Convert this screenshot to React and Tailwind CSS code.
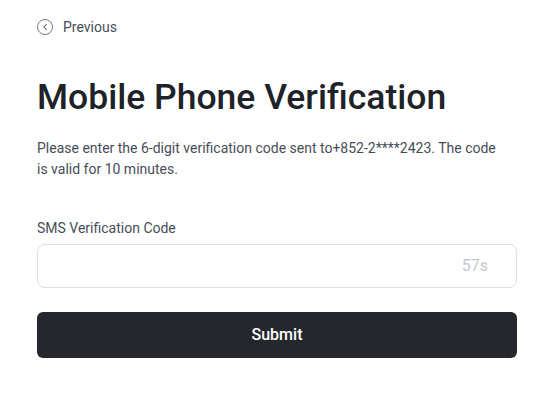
import { ChevronLeft } from 'lucide-react'

export default function App() {
  return (
    <div
      className="min-h-[395px] w-[545px] bg-white"
      style={{ fontFamily: 'Roboto, "Noto Sans", sans-serif' }}
    >
      <div className="ml-[37px] w-[480px] pt-[19px]">
        <button className="flex h-4 items-center gap-[10px] text-sm text-[#474d57]">
          <span className="flex h-4 w-4 items-center justify-center rounded-full border border-[#707a8a]">
            <ChevronLeft className="h-[10px] w-[10px] text-[#474d57]" strokeWidth={2.5} />
          </span>
          Previous
        </button>

        <h1 className="mt-[40px] text-[35.5px] leading-[44px] font-medium text-[#1e2329]">
          Mobile Phone Verification
        </h1>

        <p className="mt-[19px] text-sm leading-[21px] text-[#474d57]">
          Please enter the 6-digit verification code sent to+852-2****2423. The code
          <br />
          is valid for 10 minutes.
        </p>

        <label className="mt-[38px] block text-sm leading-5 text-[#474d57]">SMS Verification Code</label>
        <div className="mt-[6px] flex h-[44px] items-center rounded-lg border border-[#dcdfe3] pr-[28px]">
          <input className="h-full flex-1 bg-transparent px-4 outline-none" />
          <span className="text-base text-[#c5c9cf]">57s</span>
        </div>

        <button className="mt-6 flex h-[46px] w-full items-center justify-center rounded-md bg-[#25272c] text-base font-medium text-white">
          Submit
        </button>
      </div>
    </div>
  )
}
